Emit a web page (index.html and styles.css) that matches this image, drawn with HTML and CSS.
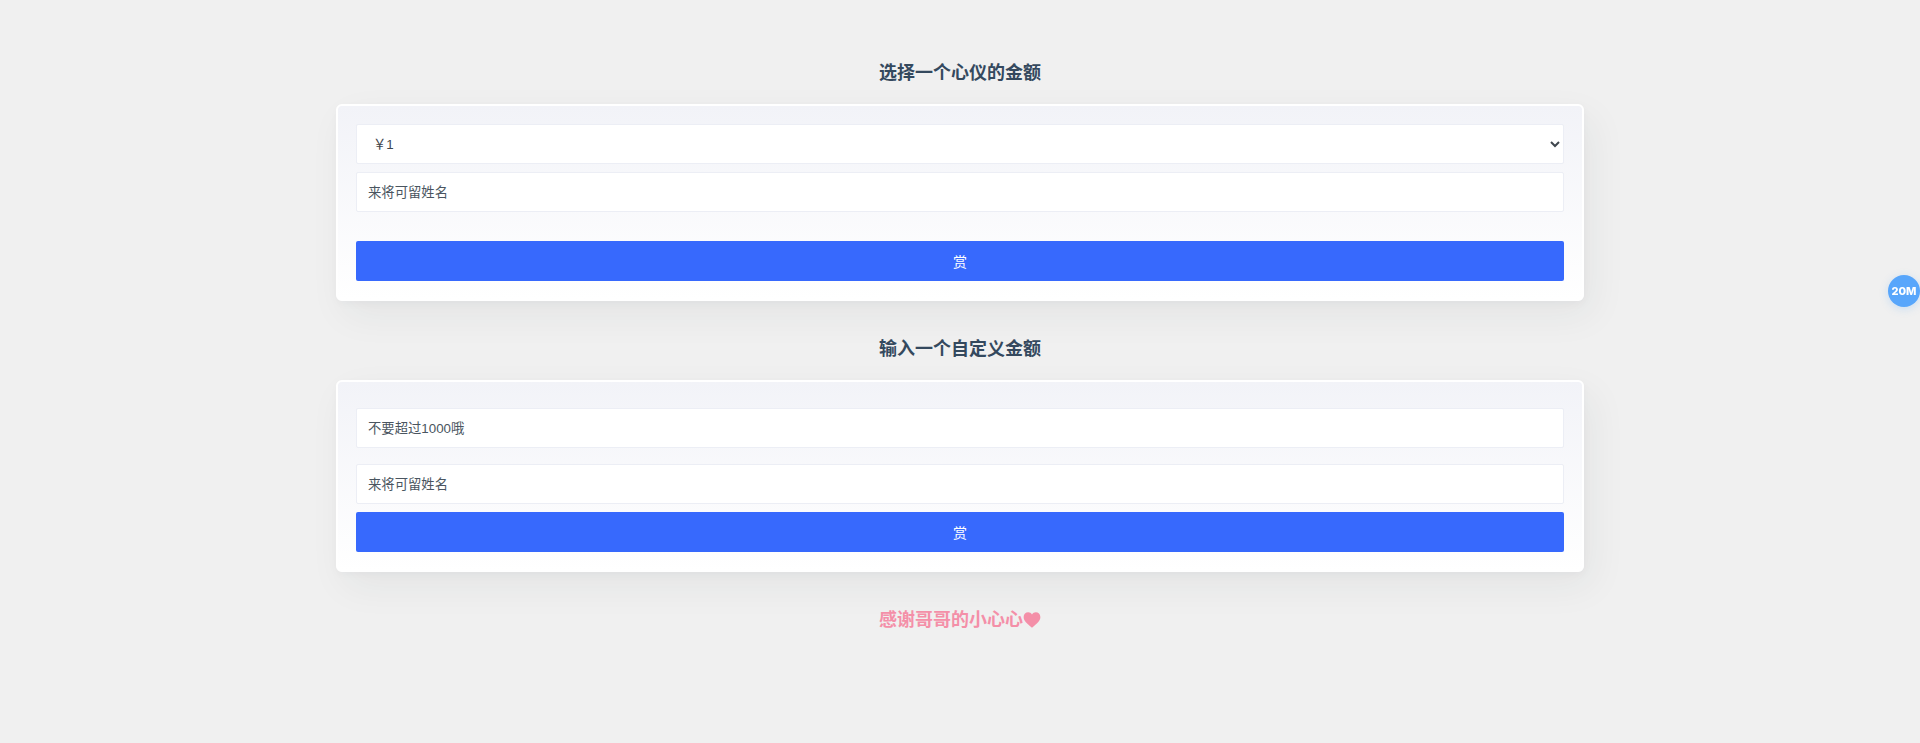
FILE: index.html
```html
<!DOCTYPE html>
<html lang="zh-CN">
<head>
    <meta charset="UTF-8">
    <meta name="viewport" content="width=device-width, initial-scale=1.0">
    <title>打赏</title>
    <link rel="stylesheet" href="styles.css">
</head>
<body>
    <main class="page">
        <h2 class="title">选择一个心仪的金额</h2>
        <form class="card card-select">
            <select class="field field-select">
                <option>￥1</option>
                <option>￥5</option>
                <option>￥10</option>
            </select>
            <input class="field" type="text" placeholder="来将可留姓名">
            <button class="submit submit-far" type="button">赏</button>
        </form>

        <h2 class="title">输入一个自定义金额</h2>
        <form class="card card-custom">
            <input class="field" type="text" placeholder="不要超过1000哦">
            <input class="field field-name" type="text" placeholder="来将可留姓名">
            <button class="submit" type="button">赏</button>
        </form>

        <h2 class="title title-thanks">感谢哥哥的小心心<svg class="heart" viewBox="0 0 24 22" aria-hidden="true"><path d="M12 21.5C5 16 .5 12 .5 6.8.5 3 3.4.5 6.700.5c2.200 0 4.200 1.100 5.300 3 1.100-1.900 3.100-3 5.300-3 3.300 0 6.200 2.500 6.200 6.300C23.500 12 19 16 12 21.500z"/></svg></h2>
    </main>
    <div class="speed-badge">20M</div>
</body>
</html>
```

FILE: styles.css
```css
* {
    box-sizing: border-box;
}

body {
    margin: 0;
    background: #f0f0f0;
    color: #34495e;
    font-family: "Liberation Sans", "Noto Sans CJK SC", sans-serif;
    overflow: hidden;
}

.page {
    width: 1248px;
    margin: 0 auto;
    padding-top: 60px;
}

.title {
    height: 26px;
    margin: 35px 0 18px;
    font-size: 18px;
    line-height: 27px;
    font-weight: 700;
    text-align: center;
}

.title:first-child {
    margin-top: 0;
}

.title-thanks {
    color: #f48fa8;
}

.heart {
    width: 18px;
    height: 16px;
    vertical-align: -2px;
    fill: #f48fa8;
}

.card {
    padding: 18px;
    border: 2px solid #fff;
    border-radius: 6px;
    background: linear-gradient(180deg, #f2f3f8 0%, #fff 100%);
    box-shadow: 8px 14px 38px rgba(39, 44, 49, 0.06), 1px 3px 8px rgba(39, 44, 49, 0.03);
}

.card-custom {
    padding-top: 26px;
}

.field {
    display: block;
    width: 100%;
    height: 40px;
    margin-bottom: 8px;
    padding: 0 11px;
    border: 1px solid #eceef5;
    border-radius: 2px;
    background: #fff;
    color: #3f464d;
    font-family: inherit;
    font-size: 13.333px;
    outline: none;
}

.field::placeholder {
    color: #4a5560;
    opacity: 1;
}

.field-select {
    padding-left: 12px;
}

.field-name {
    margin-top: 16px;
}

.submit {
    display: block;
    width: 100%;
    height: 40px;
    border: 0;
    border-radius: 2px;
    background: #3769fd;
    color: #fff;
    font-family: inherit;
    font-size: 14px;
}

.submit-far {
    margin-top: 29px;
}

.speed-badge {
    position: fixed;
    top: 275px;
    right: 0;
    width: 32px;
    height: 32px;
    border-radius: 50%;
    background: #58a6fb;
    box-shadow: 0 2px 8px rgba(88, 166, 251, 0.25);
    color: #fff;
    font-family: "Inter", sans-serif;
    font-size: 11px;
    font-weight: 800;
    line-height: 32px;
    text-align: center;
}
```
